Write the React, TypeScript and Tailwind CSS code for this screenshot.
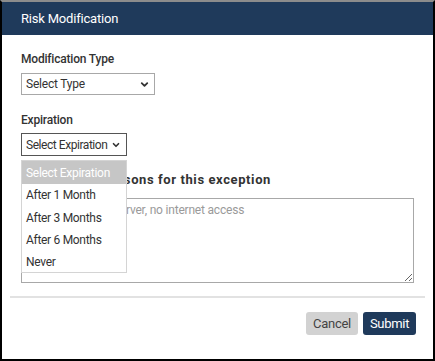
import { ChevronDown } from "lucide-react";

const options = ["Select Expiration", "After 1 Month", "After 3 Months", "After 6 Months", "Never"];

const App = () => {
  return (
    <div className="w-[435px] h-[361px] bg-white border-2 border-black border-t-[#8c8c8c] flex flex-col font-['Roboto',sans-serif] text-[#333]">
      <div className="h-[33px] bg-[#1f3a5b] flex items-center px-[19px]">
        <h1 className="text-white text-[13px] tracking-[-0.2px]">Risk Modification</h1>
      </div>

      <div className="flex-1 flex flex-col px-[19px] pt-[16px]">
        <label className="text-[12px] leading-4 font-medium tracking-[-0.2px]">Modification Type</label>
        <div className="mt-[6px] w-[134px] h-[22px] border border-[#a8a8a8] flex items-center justify-between pl-[4px] pr-[4px] text-[12px] tracking-[-0.2px]">
          <span>Select Type</span>
          <ChevronDown size={11} strokeWidth={4} />
        </div>

        <label className="mt-[17px] text-[12px] leading-4 font-medium tracking-[-0.2px]">Expiration</label>
        <div className="relative mt-[5px] w-[106px]">
          <div className="h-[23px] border border-[#555] flex items-center justify-between pl-[4px] pr-[5px] text-[12px]">
            <span className="tracking-[-0.45px]">Select Expiration</span>
            <ChevronDown size={10} strokeWidth={4} />
          </div>
          <ul className="absolute left-0 top-[27px] w-[106px] h-[113px] bg-white border border-[#d4d4d4] text-[12px] tracking-[-0.3px] z-10">
            {options.map((o, i) => (
              <li
                key={o}
                className={`h-[22.4px] flex items-center pl-[4px] ${i === 0 ? "h-[23px] bg-[#c6c6c6] text-white" : "text-[#333]"}`}
              >
                {o}
              </li>
            ))}
          </ul>
        </div>

        <label className="mt-[16px] text-[13px] leading-4 font-bold tracking-[0.6px]">Explain your reasons for this exception</label>
        <textarea
          className="mt-[10px] w-[393px] h-[85px] border border-[#a8a8a8] px-[4px] py-[2px] text-[12px] tracking-[-0.2px] placeholder:text-[#9a9a9a] outline-none"
          placeholder="e.g. Isolated test server, no internet access"
        />

        <div className="mt-[13px] -mx-[11px] border-t-2 border-[#e2e2e2]" />

        <div className="mt-[14px] -mr-[2px] flex justify-end gap-[5px]">
          <button className="w-[52px] h-[23px] rounded-[3px] bg-[#d2d2d2] text-[#444] text-[13px] tracking-[-0.3px]">Cancel</button>
          <button className="w-[53px] h-[23px] rounded-[3px] bg-[#1f3a5b] text-white text-[13px] tracking-[-0.3px]">Submit</button>
        </div>
      </div>
    </div>
  );
};

export default App;
